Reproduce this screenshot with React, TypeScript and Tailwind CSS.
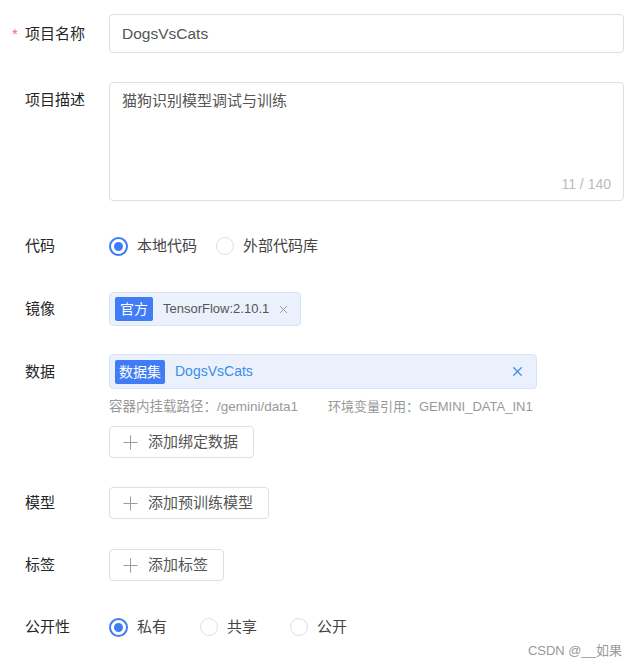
import { Plus, X } from 'lucide-react'

const font = "font-['Liberation_Sans','Noto_Sans_CJK_SC',sans-serif]"

const Label = ({ text, required }: { text: string; required?: boolean }) => (
  <div className="w-[84px] shrink-0 text-[15px] leading-[20px] text-[#262626]">
    {required && <span className="-ml-[13px] inline-block w-[13px] text-[#f56c6c]">*</span>}
    {text}
  </div>
)

const Radio = ({ label, checked }: { label: string; checked?: boolean }) => (
  <label className="flex items-center gap-[9px]">
    <span
      className={
        checked
          ? 'flex h-[19px] w-[19px] items-center justify-center rounded-full border-2 border-[#3f7cf6]'
          : 'h-[18px] w-[18px] rounded-full border border-[#dcdfe6]'
      }
    >
      {checked && <span className="h-[9px] w-[9px] rounded-full bg-[#3f7cf6]" />}
    </span>
    <span className="text-[15px] leading-[20px] text-[#444]">{label}</span>
  </label>
)

const AddButton = ({ text }: { text: string }) => (
  <button className="flex h-[32px] items-center gap-[6px] rounded-[4px] border border-[#dcdfe6] bg-white pl-[9px] pr-[15px] text-[15px] text-[#555]">
    <Plus size={23} strokeWidth={1} className="text-[#999]" />
    {text}
  </button>
)

export default function App() {
  return (
    <div className={`relative min-h-[668px] w-[637px] bg-white pl-[25px] pr-[13px] pt-[14px] ${font}`}>
      {/* 项目名称 */}
      <div className="flex items-center">
        <Label text="项目名称" required />
        <div className="flex h-[39px] flex-1 items-center rounded-[4px] border border-[#dcdfe6] px-[12px] text-[15.5px] text-[#555]">
          DogsVsCats
        </div>
      </div>

      {/* 项目描述 */}
      <div className="mt-[29px] flex items-start">
        <div className="pt-[8px]">
          <Label text="项目描述" />
        </div>
        <div className="flex h-[119px] flex-1 flex-col justify-between rounded-[4px] border border-[#dcdfe6] px-[12px] pb-[6px] pt-[8px]">
          <div className="text-[15px] leading-[20px] text-[#555]">猫狗识别模型调试与训练</div>
          <div className="self-end text-[14px] leading-[20px] text-[#bbb]">11 / 140</div>
        </div>
      </div>

      {/* 代码 */}
      <div className="mt-[28px] flex h-[34px] items-center">
        <Label text="代码" />
        <div className="flex items-center gap-[19px]">
          <Radio label="本地代码" checked />
          <Radio label="外部代码库" />
        </div>
      </div>

      {/* 镜像 */}
      <div className="mt-[29px] flex h-[34px] items-center">
        <Label text="镜像" />
        <div className="flex h-[34px] items-center rounded-[4px] border border-[#d9e4fb] bg-[#eaf1fd] pl-[5px] pr-[10px]">
          <span className="rounded-[2px] bg-[#3f7cf6] px-[5px] text-[14px] leading-[24px] text-white">官方</span>
          <span className="ml-[10px] text-[13px] text-[#555]">TensorFlow:2.10.1</span>
          <X size={13} strokeWidth={1.5} className="ml-[8px] text-[#888]" />
        </div>
      </div>

      {/* 数据 */}
      <div className="mt-[28px] flex items-start">
        <div className="flex h-[35px] items-center">
          <Label text="数据" />
        </div>
        <div className="flex flex-col items-start">
          <div className="flex h-[35px] w-[428px] items-center rounded-[4px] border border-[#d9e4fb] bg-[#eaf1fd] pl-[5px] pr-[11px]">
            <span className="rounded-[2px] bg-[#3f7cf6] px-[4px] text-[14px] leading-[24px] text-white">数据集</span>
            <span className="ml-[10px] flex-1 text-[14px] text-[#3a8ee6]">DogsVsCats</span>
            <X size={15} strokeWidth={2} className="text-[#3a8ee6]" />
          </div>
          <div className="mt-[8px] flex leading-[20px] text-[#999]">
            <span className="w-[219px] text-[13.5px]">容器内挂载路径：/gemini/data1</span>
            <span className="text-[13px]">环境变量引用：GEMINI_DATA_IN1</span>
          </div>
          <div className="mt-[9px]">
            <AddButton text="添加绑定数据" />
          </div>
        </div>
      </div>

      {/* 模型 */}
      <div className="mt-[28px] flex h-[34px] items-center">
        <Label text="模型" />
        <AddButton text="添加预训练模型" />
      </div>

      {/* 标签 */}
      <div className="mt-[28px] flex h-[34px] items-center">
        <Label text="标签" />
        <AddButton text="添加标签" />
      </div>

      {/* 公开性 */}
      <div className="mt-[28px] flex h-[34px] items-center">
        <Label text="公开性" />
        <div className="flex items-center gap-[33px]">
          <Radio label="私有" checked />
          <Radio label="共享" />
          <Radio label="公开" />
        </div>
      </div>

      <div className="absolute bottom-[8px] right-[15px] text-[13px] text-[#999]">CSDN @__如果</div>
    </div>
  )
}
